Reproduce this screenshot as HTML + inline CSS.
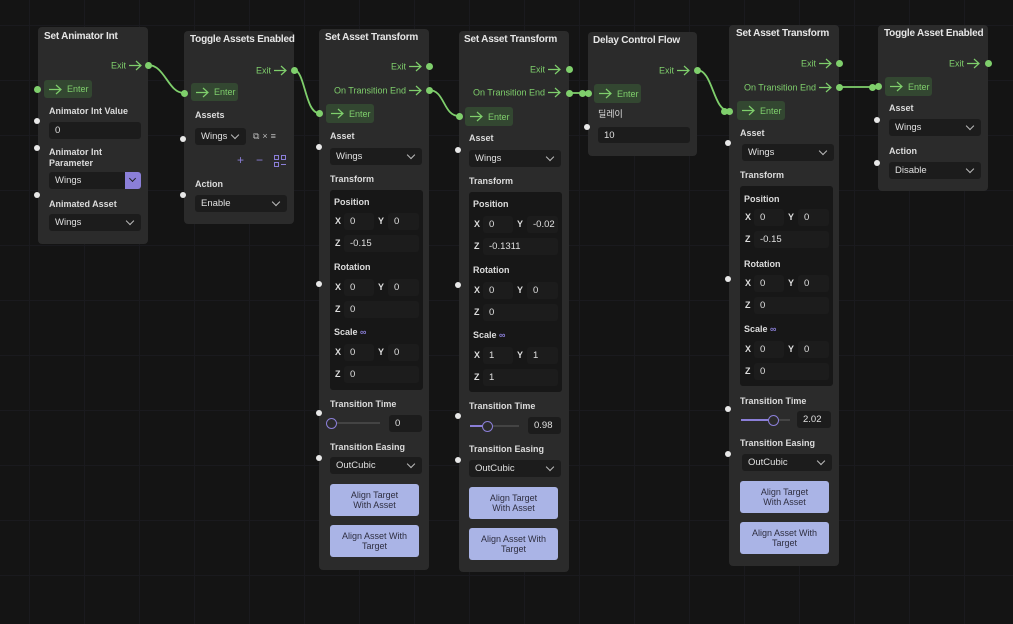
<!DOCTYPE html>
<html><head><meta charset="utf-8"><style>
*{margin:0;padding:0;box-sizing:border-box}
body{width:1013px;height:621px;overflow:hidden;background-color:#141414;
background-image:linear-gradient(#1a1a1e 0 1px,transparent 1px),linear-gradient(90deg,#1a1a1e 0 1px,transparent 1px);
background-size:55px 55px;background-position:29px 25px;position:relative;font-family:"Liberation Sans","Noto Sans CJK KR",sans-serif}
.a{position:absolute}
.n{position:absolute;background:#2b2b2b;border-radius:4px}
.t{position:absolute;font-size:10px;font-weight:bold;color:#e6e6e6;line-height:12px;white-space:nowrap;letter-spacing:-0.2px}
.l{position:absolute;font-size:9px;font-weight:bold;color:#dcdcdc;line-height:11px;white-space:nowrap}
.g{position:absolute;font-size:9px;color:#7fcf6c;line-height:12px;white-space:nowrap;text-align:right}
.g svg{margin-left:3px}
.in{position:absolute;background:#1c1c1c;border-radius:3px;font-size:9.5px;color:#e0e0e0;padding-left:6px;display:flex;align-items:center}
.sel::after{content:"";position:absolute;right:8px;top:4px;width:5px;height:5px;border-right:1.3px solid #bbb;border-bottom:1.3px solid #bbb;transform:rotate(45deg)}
.d{position:absolute;width:6px;height:6px;border-radius:50%;background:#e8e8e8;margin:-3px 0 0 -3px}
.gd{position:absolute;width:7px;height:7px;border-radius:50%;background:#7fcf6c;margin:-3.5px 0 0 -3.5px}
.en{position:absolute;background:#334731;border-radius:3px;color:#7fcf6c;font-size:9px;display:flex;align-items:center;padding-left:5px;gap:5px}
.ar{width:13px;height:11px;fill:none;stroke:#7fcf6c;stroke-width:1.2}
.box{position:absolute;background:#171717;border-radius:3px}
.xl{position:absolute;font-size:9px;font-weight:bold;color:#ddd;line-height:11px}
.btn{position:absolute;background:#aab4e6;border-radius:3px;color:#2e2e40;font-size:9px;text-align:center;line-height:10px;display:flex;align-items:center;justify-content:center}
.wr{position:absolute;left:0;top:0;width:1013px;height:621px}
</style></head><body>

<svg class="a" style="left:0;top:0" width="1013" height="621" fill="none" stroke="#7fcf6c" stroke-width="1.8">
<path d="M148 65 C165 65 168 93 184 93"/>
<path d="M294 70 C305 70 305 113 319 113"/>
<path d="M429 90 C445 90 443 116 459 116"/>
<path d="M569 93 L588 93"/>
<path d="M697 70 C713 70 713 111 729 111"/>
<path d="M839 87 L878 87"/>
</svg>

<!-- Node 1 -->
<div class="n" style="left:38px;top:27px;width:110px;height:217px"></div>
<div class="t" style="left:44px;top:31px">Set Animator Int</div>
<div class="g" style="left:80px;top:59px;width:62px"><span style="vertical-align:middle">Exit</span><svg class="ar" style="vertical-align:middle" viewBox="0 0 13 11"><path d="M0 5.5h12M7 1l5 4.5-5 4.5"/></svg></div>
<div class="gd" style="left:148px;top:65px"></div>
<div class="en" style="left:44px;top:80px;width:48px;height:18px"><svg class="ar" viewBox="0 0 13 11"><path d="M0 5.5h12M7 1l5 4.5-5 4.5"/></svg>Enter</div>
<div class="gd" style="left:37px;top:89px"></div>
<div class="l" style="left:49px;top:106px">Animator Int Value</div>
<div class="d" style="left:37px;top:121px"></div>
<div class="in" style="left:49px;top:122px;width:92px;height:17px">0</div>
<div class="l" style="left:49px;top:147px">Animator Int<br>Parameter</div>
<div class="d" style="left:37px;top:148px"></div>
<div class="in" style="left:49px;top:172px;width:92px;height:17px">Wings</div>
<div class="a" style="left:125px;top:172px;width:16px;height:17px;background:#8b7fd8;border-radius:0 3px 3px 0"><div class="a" style="left:5px;top:4px;width:5px;height:5px;border-right:1.3px solid #222;border-bottom:1.3px solid #222;transform:rotate(45deg)"></div></div>
<div class="l" style="left:49px;top:199px">Animated Asset</div>
<div class="d" style="left:37px;top:195px"></div>
<div class="in sel" style="left:49px;top:214px;width:92px;height:17px">Wings</div>

<!-- Node 2 -->
<div class="n" style="left:184px;top:31px;width:110px;height:193px"></div>
<div class="t" style="left:190px;top:34px">Toggle Assets Enabled</div>
<div class="g" style="left:225px;top:64px;width:62px"><span style="vertical-align:middle">Exit</span><svg class="ar" style="vertical-align:middle" viewBox="0 0 13 11"><path d="M0 5.5h12M7 1l5 4.5-5 4.5"/></svg></div>
<div class="gd" style="left:294px;top:70px"></div>
<div class="en" style="left:191px;top:83px;width:47px;height:18px"><svg class="ar" viewBox="0 0 13 11"><path d="M0 5.5h12M7 1l5 4.5-5 4.5"/></svg>Enter</div>
<div class="gd" style="left:184px;top:93px"></div>
<div class="l" style="left:195px;top:110px">Assets</div>
<div class="d" style="left:183px;top:139px"></div>
<div class="in sel" style="left:195px;top:128px;width:51px;height:17px">Wings</div>
<div class="a" style="left:253px;top:131px;font-size:9px;color:#bbb;letter-spacing:3px">⧉×≡</div>
<div class="a" style="left:237px;top:154px;font-size:12px;color:#8b7fd8;line-height:12px">+</div>
<div class="a" style="left:256px;top:154px;font-size:12px;color:#8b7fd8;line-height:12px">−</div>
<svg class="a" style="left:274px;top:155px" width="12" height="12" fill="none" stroke="#8b7fd8" stroke-width="1"><rect x="0.5" y="0.5" width="4" height="4"/><rect x="7.5" y="0.5" width="4" height="4"/><rect x="0.5" y="7.5" width="4" height="4"/><path d="M7 9.5h5"/></svg>
<div class="l" style="left:195px;top:179px">Action</div>
<div class="d" style="left:183px;top:195px"></div>
<div class="in sel" style="left:195px;top:195px;width:92px;height:17px">Enable</div>

<!-- Node 5 -->
<div class="n" style="left:588px;top:32px;width:109px;height:124px"></div>
<div class="t" style="left:593px;top:35px">Delay Control Flow</div>
<div class="g" style="left:628px;top:64px;width:62px"><span style="vertical-align:middle">Exit</span><svg class="ar" style="vertical-align:middle" viewBox="0 0 13 11"><path d="M0 5.5h12M7 1l5 4.5-5 4.5"/></svg></div>
<div class="gd" style="left:697px;top:70px"></div>
<div class="en" style="left:594px;top:84px;width:47px;height:19px"><svg class="ar" viewBox="0 0 13 11"><path d="M0 5.5h12M7 1l5 4.5-5 4.5"/></svg>Enter</div>
<div class="gd" style="left:588px;top:93px"></div>
<div class="gd" style="left:582px;top:93px"></div>
<div class="l" style="left:598px;top:109px;font-weight:normal">딜레이</div>
<div class="d" style="left:587px;top:127px"></div>
<div class="in" style="left:598px;top:127px;width:92px;height:16px">10</div>

<!-- Node 7 -->
<div class="n" style="left:878px;top:25px;width:110px;height:166px"></div>
<div class="t" style="left:884px;top:28px">Toggle Asset Enabled</div>
<div class="g" style="left:918px;top:57px;width:62px"><span style="vertical-align:middle">Exit</span><svg class="ar" style="vertical-align:middle" viewBox="0 0 13 11"><path d="M0 5.5h12M7 1l5 4.5-5 4.5"/></svg></div>
<div class="gd" style="left:988px;top:63px"></div>
<div class="en" style="left:885px;top:77px;width:47px;height:19px"><svg class="ar" viewBox="0 0 13 11"><path d="M0 5.5h12M7 1l5 4.5-5 4.5"/></svg>Enter</div>
<div class="gd" style="left:878px;top:86px"></div>
<div class="gd" style="left:872px;top:87px"></div>
<div class="l" style="left:889px;top:103px">Asset</div>
<div class="d" style="left:877px;top:120px"></div>
<div class="in sel" style="left:889px;top:119px;width:92px;height:17px">Wings</div>
<div class="l" style="left:889px;top:146px">Action</div>
<div class="d" style="left:877px;top:163px"></div>
<div class="in sel" style="left:889px;top:162px;width:92px;height:17px">Disable</div>

<!-- Node 3 -->
<div class="wr">
<div class="n" style="left:319px;top:29px;width:110px;height:541px"></div>
<div class="t" style="left:325px;top:32px">Set Asset Transform</div>
<div class="g" style="left:350px;top:60px;width:72px"><span style="vertical-align:middle">Exit</span><svg class="ar" style="vertical-align:middle" viewBox="0 0 13 11"><path d="M0 5.5h12M7 1l5 4.5-5 4.5"/></svg></div>
<div class="gd" style="left:429px;top:66px"></div>
<div class="g" style="left:316px;top:84px;width:106px"><span style="vertical-align:middle">On Transition End</span><svg class="ar" style="vertical-align:middle" viewBox="0 0 13 11"><path d="M0 5.5h12M7 1l5 4.5-5 4.5"/></svg></div>
<div class="gd" style="left:429px;top:90px"></div>
<div class="en" style="left:326px;top:104px;width:48px;height:19px"><svg class="ar" viewBox="0 0 13 11"><path d="M0 5.5h12M7 1l5 4.5-5 4.5"/></svg>Enter</div>
<div class="gd" style="left:319px;top:113px"></div>
<div class="l" style="left:330px;top:131px">Asset</div>
<div class="d" style="left:319px;top:147px"></div>
<div class="in sel" style="left:330px;top:148px;width:92px;height:17px">Wings</div>
<div class="l" style="left:330px;top:174px">Transform</div>
<div class="box" style="left:330px;top:190px;width:93px;height:200px"></div>
<div class="l" style="left:334px;top:197px">Position</div>
<div class="xl" style="left:335px;top:216px">X</div><div class="in" style="left:344px;top:213px;width:30px;height:17px">0</div>
<div class="xl" style="left:378px;top:216px">Y</div><div class="in" style="left:388px;top:213px;width:31px;height:17px">0</div>
<div class="xl" style="left:335px;top:238px">Z</div><div class="in" style="left:344px;top:235px;width:75px;height:17px">-0.15</div>
<div class="l" style="left:334px;top:262px">Rotation</div>
<div class="d" style="left:319px;top:284px"></div>
<div class="xl" style="left:335px;top:282px">X</div><div class="in" style="left:344px;top:279px;width:30px;height:17px">0</div>
<div class="xl" style="left:378px;top:282px">Y</div><div class="in" style="left:388px;top:279px;width:31px;height:17px">0</div>
<div class="xl" style="left:335px;top:304px">Z</div><div class="in" style="left:344px;top:301px;width:75px;height:17px">0</div>
<div class="l" style="left:334px;top:327px">Scale <span style="color:#8b7fd8">∞</span></div>
<div class="xl" style="left:335px;top:347px">X</div><div class="in" style="left:344px;top:344px;width:30px;height:17px">0</div>
<div class="xl" style="left:378px;top:347px">Y</div><div class="in" style="left:388px;top:344px;width:31px;height:17px">0</div>
<div class="xl" style="left:335px;top:369px">Z</div><div class="in" style="left:344px;top:366px;width:75px;height:17px">0</div>
<div class="l" style="left:330px;top:399px">Transition Time</div>
<div class="d" style="left:319px;top:413px"></div>
<div class="a" style="left:331px;top:422px;width:49px;height:2px;background:#444"></div>
<div class="a" style="left:326px;top:418px;width:11px;height:11px;border-radius:50%;border:1.5px solid #8b7fd8;background:#2b2b2b"></div>
<div class="in" style="left:389px;top:415px;width:33px;height:17px">0</div>
<div class="l" style="left:330px;top:442px">Transition Easing</div>
<div class="d" style="left:319px;top:458px"></div>
<div class="in sel" style="left:330px;top:457px;width:92px;height:17px">OutCubic</div>
<div class="btn" style="left:330px;top:484px;width:89px;height:32px">Align Target<br>With Asset</div>
<div class="btn" style="left:330px;top:525px;width:89px;height:32px">Align Asset With<br>Target</div>
</div>

<!-- Node 4 -->
<div class="wr" style="left:139px;top:3px">
<div class="n" style="left:320px;top:28px;width:110px;height:541px"></div>
<div class="t" style="left:325px;top:31px">Set Asset Transform</div>
<div class="g" style="left:350px;top:60px;width:72px"><span style="vertical-align:middle">Exit</span><svg class="ar" style="vertical-align:middle" viewBox="0 0 13 11"><path d="M0 5.5h12M7 1l5 4.5-5 4.5"/></svg></div>
<div class="gd" style="left:430px;top:66px"></div>
<div class="g" style="left:316px;top:83px;width:106px"><span style="vertical-align:middle">On Transition End</span><svg class="ar" style="vertical-align:middle" viewBox="0 0 13 11"><path d="M0 5.5h12M7 1l5 4.5-5 4.5"/></svg></div>
<div class="gd" style="left:430px;top:90px"></div>
<div class="en" style="left:326px;top:104px;width:48px;height:19px"><svg class="ar" viewBox="0 0 13 11"><path d="M0 5.5h12M7 1l5 4.5-5 4.5"/></svg>Enter</div>
<div class="gd" style="left:320px;top:113px"></div>
<div class="l" style="left:330px;top:130px">Asset</div>
<div class="d" style="left:319px;top:147px"></div>
<div class="in sel" style="left:330px;top:147px;width:92px;height:17px">Wings</div>
<div class="l" style="left:330px;top:173px">Transform</div>
<div class="box" style="left:330px;top:189px;width:93px;height:200px"></div>
<div class="l" style="left:334px;top:196px">Position</div>
<div class="xl" style="left:335px;top:216px">X</div><div class="in" style="left:344px;top:213px;width:30px;height:17px">0</div>
<div class="xl" style="left:378px;top:216px">Y</div><div class="in" style="left:388px;top:213px;width:31px;height:17px">-0.02</div>
<div class="xl" style="left:335px;top:238px">Z</div><div class="in" style="left:344px;top:235px;width:75px;height:17px">-0.1311</div>
<div class="l" style="left:334px;top:262px">Rotation</div>
<div class="d" style="left:319px;top:282px"></div>
<div class="xl" style="left:335px;top:282px">X</div><div class="in" style="left:344px;top:279px;width:30px;height:17px">0</div>
<div class="xl" style="left:378px;top:282px">Y</div><div class="in" style="left:388px;top:279px;width:31px;height:17px">0</div>
<div class="xl" style="left:335px;top:304px">Z</div><div class="in" style="left:344px;top:301px;width:75px;height:17px">0</div>
<div class="l" style="left:334px;top:327px">Scale <span style="color:#8b7fd8">∞</span></div>
<div class="xl" style="left:335px;top:347px">X</div><div class="in" style="left:344px;top:344px;width:30px;height:17px">1</div>
<div class="xl" style="left:378px;top:347px">Y</div><div class="in" style="left:388px;top:344px;width:31px;height:17px">1</div>
<div class="xl" style="left:335px;top:369px">Z</div><div class="in" style="left:344px;top:366px;width:75px;height:17px">1</div>
<div class="l" style="left:330px;top:398px">Transition Time</div>
<div class="d" style="left:319px;top:413px"></div>
<div class="a" style="left:331px;top:422px;width:49px;height:2px;background:#444"></div>
<div class="a" style="left:331px;top:422px;width:17px;height:2px;background:#8b7fd8"></div>
<div class="a" style="left:343px;top:418px;width:11px;height:11px;border-radius:50%;border:1.5px solid #8b7fd8;background:#2b2b2b"></div>
<div class="in" style="left:389px;top:414px;width:33px;height:17px">0.98</div>
<div class="l" style="left:330px;top:441px">Transition Easing</div>
<div class="d" style="left:319px;top:457px"></div>
<div class="in sel" style="left:330px;top:457px;width:92px;height:17px">OutCubic</div>
<div class="btn" style="left:330px;top:484px;width:89px;height:32px">Align Target<br>With Asset</div>
<div class="btn" style="left:330px;top:525px;width:89px;height:32px">Align Asset With<br>Target</div>
</div>

<!-- Node 6 -->
<div class="wr" style="left:410px;top:-4px">
<div class="n" style="left:319px;top:29px;width:110px;height:541px"></div>
<div class="t" style="left:326px;top:32px">Set Asset Transform</div>
<div class="g" style="left:350px;top:61px;width:72px"><span style="vertical-align:middle">Exit</span><svg class="ar" style="vertical-align:middle" viewBox="0 0 13 11"><path d="M0 5.5h12M7 1l5 4.5-5 4.5"/></svg></div>
<div class="gd" style="left:429px;top:67px"></div>
<div class="g" style="left:316px;top:85px;width:106px"><span style="vertical-align:middle">On Transition End</span><svg class="ar" style="vertical-align:middle" viewBox="0 0 13 11"><path d="M0 5.5h12M7 1l5 4.5-5 4.5"/></svg></div>
<div class="gd" style="left:429px;top:91px"></div>
<div class="en" style="left:327px;top:105px;width:48px;height:19px"><svg class="ar" viewBox="0 0 13 11"><path d="M0 5.5h12M7 1l5 4.5-5 4.5"/></svg>Enter</div>
<div class="gd" style="left:319px;top:115px"></div>
<div class="gd" style="left:314px;top:115px"></div>
<div class="l" style="left:330px;top:132px">Asset</div>
<div class="d" style="left:318px;top:147px"></div>
<div class="in sel" style="left:332px;top:148px;width:92px;height:17px">Wings</div>
<div class="l" style="left:330px;top:174px">Transform</div>
<div class="box" style="left:330px;top:190px;width:93px;height:200px"></div>
<div class="l" style="left:334px;top:198px">Position</div>
<div class="xl" style="left:335px;top:216px">X</div><div class="in" style="left:344px;top:213px;width:30px;height:17px">0</div>
<div class="xl" style="left:378px;top:216px">Y</div><div class="in" style="left:388px;top:213px;width:31px;height:17px">0</div>
<div class="xl" style="left:335px;top:238px">Z</div><div class="in" style="left:344px;top:235px;width:75px;height:17px">-0.15</div>
<div class="l" style="left:334px;top:263px">Rotation</div>
<div class="d" style="left:318px;top:283px"></div>
<div class="xl" style="left:335px;top:282px">X</div><div class="in" style="left:344px;top:279px;width:30px;height:17px">0</div>
<div class="xl" style="left:378px;top:282px">Y</div><div class="in" style="left:388px;top:279px;width:31px;height:17px">0</div>
<div class="xl" style="left:335px;top:304px">Z</div><div class="in" style="left:344px;top:301px;width:75px;height:17px">0</div>
<div class="l" style="left:334px;top:328px">Scale <span style="color:#8b7fd8">∞</span></div>
<div class="xl" style="left:335px;top:348px">X</div><div class="in" style="left:344px;top:345px;width:30px;height:17px">0</div>
<div class="xl" style="left:378px;top:348px">Y</div><div class="in" style="left:388px;top:345px;width:31px;height:17px">0</div>
<div class="xl" style="left:335px;top:370px">Z</div><div class="in" style="left:344px;top:367px;width:75px;height:17px">0</div>
<div class="l" style="left:330px;top:400px">Transition Time</div>
<div class="d" style="left:318px;top:413px"></div>
<div class="a" style="left:331px;top:423px;width:49px;height:2px;background:#444"></div>
<div class="a" style="left:331px;top:423px;width:34px;height:2px;background:#8b7fd8"></div>
<div class="a" style="left:358px;top:419px;width:11px;height:11px;border-radius:50%;border:1.5px solid #8b7fd8;background:#2b2b2b"></div>
<div class="in" style="left:387px;top:415px;width:34px;height:17px">2.02</div>
<div class="l" style="left:330px;top:442px">Transition Easing</div>
<div class="d" style="left:318px;top:458px"></div>
<div class="in sel" style="left:332px;top:458px;width:90px;height:17px">OutCubic</div>
<div class="btn" style="left:330px;top:485px;width:89px;height:32px">Align Target<br>With Asset</div>
<div class="btn" style="left:330px;top:526px;width:89px;height:32px">Align Asset With<br>Target</div>
</div>

</body></html>
